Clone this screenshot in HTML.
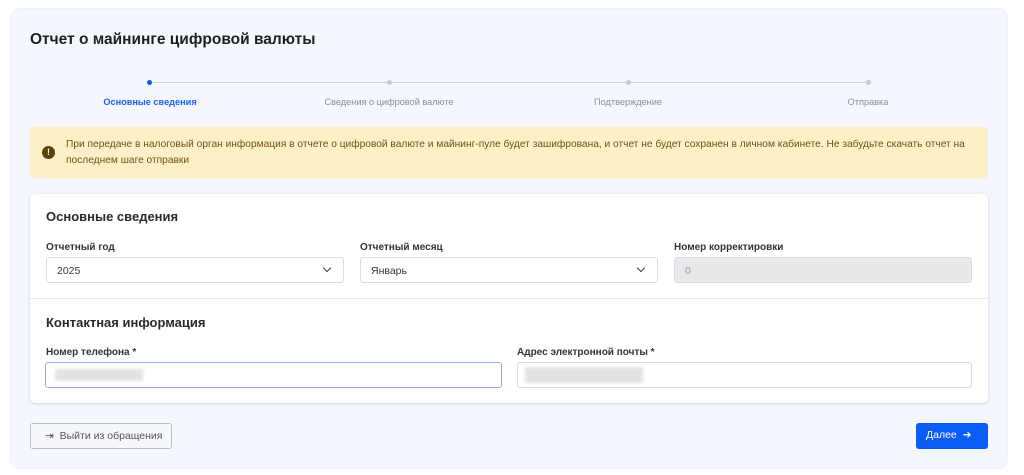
<!DOCTYPE html>
<html><head><meta charset="utf-8"><style>
*{box-sizing:border-box;margin:0;padding:0}
body{width:1024px;height:475px;background:#fff;font-family:"Liberation Sans",sans-serif;position:relative;overflow:hidden;color:#222}
.panel{position:absolute;left:10px;top:8px;width:998px;height:461px;background:#f4f7fd;border-radius:10px;border:1px solid #eef1f7}
.abs{position:absolute}
h1{position:absolute;left:30px;top:31px;font-size:15.5px;font-weight:bold;color:#1f1f1f}
.line{position:absolute;top:82px;height:1px;background:#cfd3da;left:149px;width:719px}
.dot{position:absolute;top:80px;width:5px;height:5px;border-radius:50%;background:#c8ccd3}
.sl{position:absolute;top:97px;font-size:9.2px;color:#8a8f98;transform:translateX(-50%);white-space:nowrap}
.alert{position:absolute;left:30px;top:127px;width:958px;height:51px;background:#fdf0c9;border-radius:4px;font-size:10.2px;color:#6b5416;line-height:16px;padding:10px 14px 0 36px}
.alert .ic{position:absolute;left:12px;top:19px;width:13px;height:13px;border-radius:50%;background:#5a4308;color:#fdf0c9;font-size:9px;font-weight:bold;text-align:center;line-height:13px}
.card{position:absolute;left:30px;top:194px;width:958px;height:209px;background:#fff;border-radius:5px;box-shadow:0 1px 3px rgba(0,0,0,.15)}
.h2{position:absolute;font-size:13px;font-weight:bold;color:#2a2a2a}
.lb{position:absolute;font-size:10px;font-weight:bold;color:#333}
.in{position:absolute;height:26px;border:1px solid #d9dce2;border-radius:3px;background:#fff;font-size:10.5px;color:#333;padding:7px 10px}
.chev{position:absolute;right:13px;top:7px;width:6px;height:6px;border-right:1.5px solid #444;border-bottom:1.5px solid #444;transform:rotate(45deg)}
.blur{position:absolute;background:#e2e2e4;filter:blur(1.5px)}
</style></head><body>
<div class="panel"></div>
<h1>Отчет о майнинге цифровой валюты</h1>
<div class="line"></div>
<div class="dot" style="left:147px;background:#0d5cf2"></div>
<div class="dot" style="left:387px"></div>
<div class="dot" style="left:626px"></div>
<div class="dot" style="left:866px"></div>
<div class="sl" style="left:150px;color:#1d5ff0;font-weight:bold">Основные сведения</div>
<div class="sl" style="left:389px">Сведения о цифровой валюте</div>
<div class="sl" style="left:628px">Подтверждение</div>
<div class="sl" style="left:868px">Отправка</div>
<div class="alert"><div class="ic">!</div>При передаче в налоговый орган информация в отчете о цифровой валюте и майнинг-пуле будет зашифрована, и отчет не будет сохранен в личном кабинете. Не забудьте скачать отчет на<br>последнем шаге отправки</div>
<div class="card">
<div class="h2" style="left:16px;top:15px">Основные сведения</div>
<div class="lb" style="left:16px;top:48px">Отчетный год</div>
<div class="lb" style="left:330px;top:48px">Отчетный месяц</div>
<div class="lb" style="left:644px;top:48px">Номер корректировки</div>
<div class="in" style="left:16px;top:63px;width:298px">2025<div class="chev"></div></div>
<div class="in" style="left:330px;top:63px;width:298px">Январь<div class="chev"></div></div>
<div class="in" style="left:644px;top:63px;width:298px;background:#e8e9eb;color:#999">0</div>
<div class="abs" style="left:0;top:104px;width:958px;height:1px;background:#e6e8ec"></div>
<div class="h2" style="left:16px;top:121px">Контактная информация</div>
<div class="lb" style="left:16px;top:153px">Номер телефона *</div>
<div class="lb" style="left:487px;top:153px">Адрес электронной почты *</div>
<div class="in" style="left:15px;top:168px;width:457px;height:26px;border-color:#8ab0f5"><div class="blur" style="left:9px;top:6px;width:88px;height:12px"></div></div>
<div class="in" style="left:487px;top:168px;width:455px;height:26px"><div class="blur" style="left:7px;top:4px;width:118px;height:16px"></div></div>
</div>
<div class="abs" style="left:30px;top:423px;width:142px;height:26px;border:1px solid #b9bdc5;border-radius:3px;background:#f7f8fb;font-size:10.5px;color:#555;padding:6px 0 0 14px">⇥&nbsp; Выйти из обращения</div>
<div class="abs" style="left:916px;top:423px;width:72px;height:26px;background:#0b5cf5;border-radius:3px;color:#fff;font-size:10.5px;padding:6px 0 0 10px">Далее &nbsp;➔</div>
</body></html>
